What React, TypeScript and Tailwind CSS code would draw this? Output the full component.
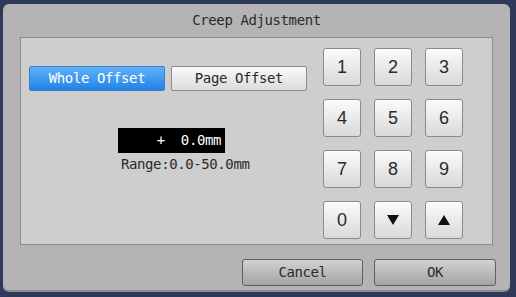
import React from "react";

const mono = "font-['DejaVu_Sans_Mono','Liberation_Mono',monospace] text-[14px] tracking-[-0.4px]";

function Key({ children }: { children: React.ReactNode }) {
  return (
    <button className="w-[38px] h-[38px] rounded-[3px] border border-[#8a8a8a] bg-gradient-to-b from-[#fbfbfb] to-[#d9d9d9] flex items-center justify-center text-[18px] text-[#2a2a2a] font-['Liberation_Sans',Arial,sans-serif] shadow-[inset_0_1px_0_#fff]">
      {children}
    </button>
  );
}

function Tri({ up }: { up?: boolean }) {
  return (
    <svg width="12" height="10" viewBox="0 0 12 10">
      <polygon points={up ? "6,0 12,10 0,10" : "0,0 12,0 6,10"} fill="#111" />
    </svg>
  );
}

export default function App() {
  return (
    <div className="w-[516px] h-[297px] bg-[#2f3a5a] pt-[4px] pl-[3px] overflow-hidden">
      <div className="w-[507px] h-[288px] rounded-[6px] bg-[#b5b3b6] border-b-2 border-[#8e8c8f] flex flex-col">
        <div className={`h-[33px] flex items-center justify-center pb-[1px] text-[#2a2a2a] ${mono}`}>Creep Adjustment</div>

        <div className="ml-[17px] w-[473px] h-[208px] bg-[#cecece] border border-[#8c8c8c] flex">
          <div className="w-[302px] flex flex-col">
            <div className="flex gap-[6px] pl-[8px] pt-[28px]">
              <button className={`w-[136px] h-[25px] rounded-[2px] border border-[#3b7fc4] bg-gradient-to-b from-[#5fb2f8] to-[#1f82e6] text-white ${mono}`}>Whole Offset</button>
              <button className={`w-[136px] h-[25px] rounded-[2px] border border-[#8a8a8a] bg-gradient-to-b from-[#fafafa] to-[#dcdcdc] text-[#2a2a2a] ${mono}`}>Page Offset</button>
            </div>
            <div className="ml-[97px] mt-[37px] flex flex-col items-start">
              <div className={`w-[107px] h-[25px] bg-black text-white text-right pr-[4px] leading-[25px] whitespace-pre ${mono}`}>+  0.0mm</div>
              <div className={`ml-[3px] mt-[3px] leading-[16px] text-[#2a2a2a] ${mono}`}>Range:0.0-50.0mm</div>
            </div>
          </div>
          <div className="pt-[10px] grid grid-cols-[38px_38px_38px] gap-x-[13px] gap-y-[13px] content-start">
            <Key>1</Key>
            <Key>2</Key>
            <Key>3</Key>
            <Key>4</Key>
            <Key>5</Key>
            <Key>6</Key>
            <Key>7</Key>
            <Key>8</Key>
            <Key>9</Key>
            <Key>0</Key>
            <Key><Tri /></Key>
            <Key><Tri up /></Key>
          </div>
        </div>

        <div className="flex justify-end gap-[11px] pr-[14px] mt-[14px]">
          <button className={`w-[121px] h-[27px] rounded-[3px] border border-[#5e5e5e] bg-gradient-to-b from-[#d2d2d2] to-[#a4a4a4] text-[#2a2a2a] ${mono}`}>Cancel</button>
          <button className={`w-[122px] h-[27px] rounded-[3px] border border-[#5e5e5e] bg-gradient-to-b from-[#d2d2d2] to-[#a4a4a4] text-[#2a2a2a] ${mono}`}>OK</button>
        </div>
      </div>
    </div>
  );
}
